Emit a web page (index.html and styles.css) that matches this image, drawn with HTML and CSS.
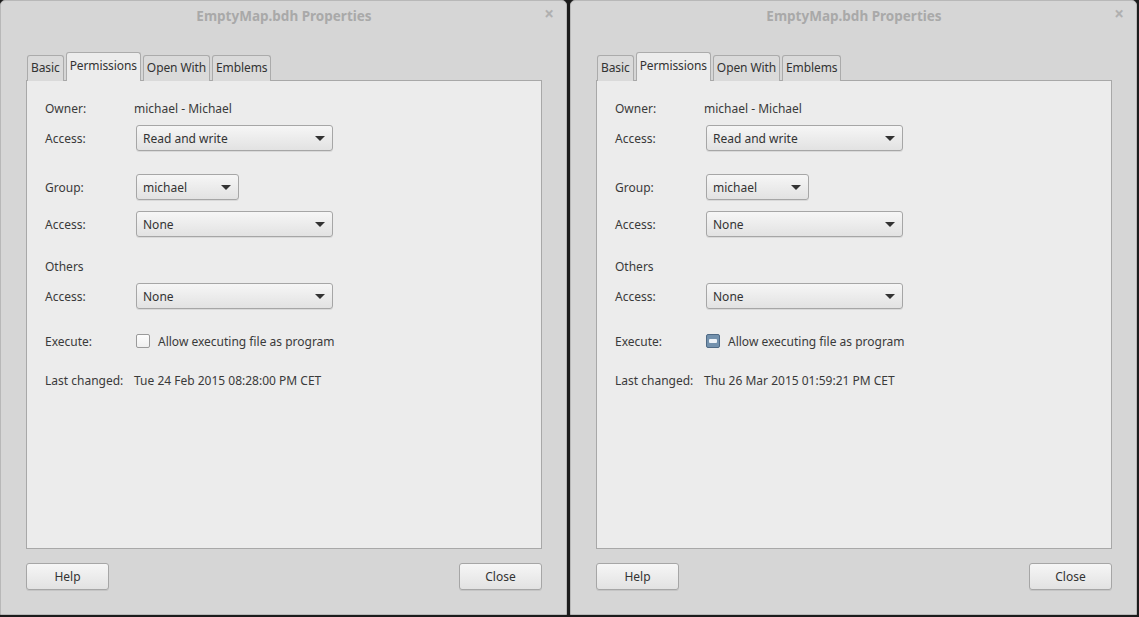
FILE: index.html
```html
<!DOCTYPE html>
<html>
<head>
<meta charset="utf-8">
<link rel="stylesheet" href="styles.css">
</head>
<body>
<div class="desktop">
  <div class="window">
    <div class="titlebar">
      <span class="title">EmptyMap.bdh Properties</span>
      <span class="close-x">×</span>
    </div>
    <div class="wbody">
      <div class="tabs">
        <div class="tab">Basic</div>
        <div class="tab active">Permissions</div>
        <div class="tab">Open With</div>
        <div class="tab">Emblems</div>
      </div>
      <div class="panel">
        <div class="row r-owner"><span class="lbl">Owner:</span><span class="val">michael - Michael</span></div>
        <div class="row r-access1"><span class="lbl">Access:</span><div class="combo wide"><span>Read and write</span><i class="arrow"></i></div></div>
        <div class="row r-group"><span class="lbl">Group:</span><div class="combo narrow"><span>michael</span><i class="arrow"></i></div></div>
        <div class="row r-access2"><span class="lbl">Access:</span><div class="combo wide"><span>None</span><i class="arrow"></i></div></div>
        <div class="row r-others"><span class="lbl">Others</span></div>
        <div class="row r-access3"><span class="lbl">Access:</span><div class="combo wide"><span>None</span><i class="arrow"></i></div></div>
        <div class="row r-exec"><span class="lbl">Execute:</span><span class="check"></span><span class="chk-lbl">Allow executing file as program</span></div>
        <div class="row r-last"><span class="lbl">Last changed:</span><span class="val">Tue 24 Feb 2015 08:28:00 PM CET</span></div>
      </div>
      <div class="buttons">
        <div class="btn">Help</div>
        <div class="btn">Close</div>
      </div>
    </div>
  </div>
  <div class="window">
    <div class="titlebar">
      <span class="title">EmptyMap.bdh Properties</span>
      <span class="close-x">×</span>
    </div>
    <div class="wbody">
      <div class="tabs">
        <div class="tab">Basic</div>
        <div class="tab active">Permissions</div>
        <div class="tab">Open With</div>
        <div class="tab">Emblems</div>
      </div>
      <div class="panel">
        <div class="row r-owner"><span class="lbl">Owner:</span><span class="val">michael - Michael</span></div>
        <div class="row r-access1"><span class="lbl">Access:</span><div class="combo wide"><span>Read and write</span><i class="arrow"></i></div></div>
        <div class="row r-group"><span class="lbl">Group:</span><div class="combo narrow"><span>michael</span><i class="arrow"></i></div></div>
        <div class="row r-access2"><span class="lbl">Access:</span><div class="combo wide"><span>None</span><i class="arrow"></i></div></div>
        <div class="row r-others"><span class="lbl">Others</span></div>
        <div class="row r-access3"><span class="lbl">Access:</span><div class="combo wide"><span>None</span><i class="arrow"></i></div></div>
        <div class="row r-exec"><span class="lbl">Execute:</span><span class="check mixed"></span><span class="chk-lbl">Allow executing file as program</span></div>
        <div class="row r-last"><span class="lbl">Last changed:</span><span class="val">Thu 26 Mar 2015 01:59:21 PM CET</span></div>
      </div>
      <div class="buttons">
        <div class="btn">Help</div>
        <div class="btn">Close</div>
      </div>
    </div>
  </div>
</div>
</body>
</html>
```
FILE: styles.css
```css
html, body {
  margin: 0;
  padding: 0;
  background: #1c1c1c;
  width: 1139px;
  height: 617px;
  overflow: hidden;
}
.desktop {
  display: flex;
  gap: 3px;
  font-family: "Noto Sans", "DejaVu Sans", sans-serif;
  font-size: 12px;
  color: #3a3a3a;
}
.window {
  width: 565px;
  height: 613px;
  background: #d6d6d6;
  border: 1px solid #b8b8b8;
  border-radius: 5px 5px 0 0;
  display: flex;
  flex-direction: column;
  position: relative;
}
.titlebar {
  height: 30px;
  display: flex;
  align-items: center;
  justify-content: center;
  position: relative;
}
.title {
  font-weight: bold;
  font-size: 13.5px;
  color: #a9a9a9;
  margin-left: 1px;
}
.close-x {
  position: absolute;
  right: 12px;
  top: 4px;
  font-size: 17px;
  font-weight: bold;
  color: #b0b0b0;
  line-height: 18px;
}
.wbody {
  padding: 21px 24px 0 25px;
  display: flex;
  flex-direction: column;
}
.tabs {
  display: flex;
  align-items: flex-end;
  gap: 2px;
  margin-left: 1px;
  height: 29px;
  position: relative;
  z-index: 1;
  margin-bottom: -1px;
}
.tab {
  height: 26px;
  box-sizing: border-box;
  padding: 3px 3px 0 3px;
  border: 1px solid #ababab;
  border-bottom: none;
  border-radius: 3px 3px 0 0;
  background: #dadada;
  line-height: 18px;
  color: #333;
  letter-spacing: -0.1px;
}
.tab.active {
  height: 29px;
  background: #ececec;
  padding-top: 4px;
}
.panel {
  height: 469px;
  box-sizing: border-box;
  background: #ececec;
  border: 1px solid #a8a8a8;
  padding: 15px 0 0 18px;
  display: flex;
  flex-direction: column;
}
.row {
  display: flex;
  align-items: center;
  height: 24px;
}
.lbl {
  width: 89px;
  flex: none;
}
.r-access1 { margin-top: 5px; height: 26px; }
.r-group { margin-top: 23px; height: 26px; }
.r-access2 { margin-top: 11px; height: 26px; }
.r-others { margin-top: 17px; }
.r-access3 { margin-top: 5px; height: 26px; }
.r-exec { margin-top: 20px; }
.r-last { margin-top: 15px; }
.combo {
  margin-left: 2px;
  height: 26px;
  box-sizing: border-box;
  border: 1px solid #a6a6a6;
  border-radius: 3px;
  background: linear-gradient(#f6f6f6, #e2e2e2);
  box-shadow: 0 1px 0 rgba(0,0,0,0.08);
  display: flex;
  align-items: center;
  justify-content: space-between;
  padding: 0 7px 0 6px;
  color: #333;
}
.combo.wide { width: 197px; }
.combo.narrow { width: 103px; }
.arrow {
  width: 0;
  height: 0;
  border-left: 5px solid transparent;
  border-right: 5px solid transparent;
  border-top: 5px solid #333;
}
.check {
  margin-left: 2px;
  width: 14px;
  height: 14px;
  box-sizing: border-box;
  border: 1px solid #9a9a9a;
  border-radius: 2px;
  background: linear-gradient(#fdfdfd, #efefef);
  margin-right: 8px;
  position: relative;
}
.check.mixed {
  background: #7391ad;
  border-color: #4f6a85;
}
.check.mixed::after {
  content: "";
  position: absolute;
  left: 2px;
  top: 4px;
  width: 8px;
  height: 4px;
  box-sizing: border-box;
  background: #eef3f8;
  border-radius: 1px;
}
.buttons {
  display: flex;
  justify-content: space-between;
  margin-top: 14px;
}
.btn {
  width: 83px;
  height: 27px;
  box-sizing: border-box;
  border: 1px solid #a6a6a6;
  border-radius: 3px;
  background: linear-gradient(#f6f6f6, #e2e2e2);
  box-shadow: 0 1px 0 rgba(0,0,0,0.08);
  display: flex;
  align-items: center;
  justify-content: center;
  color: #333;
}
```
